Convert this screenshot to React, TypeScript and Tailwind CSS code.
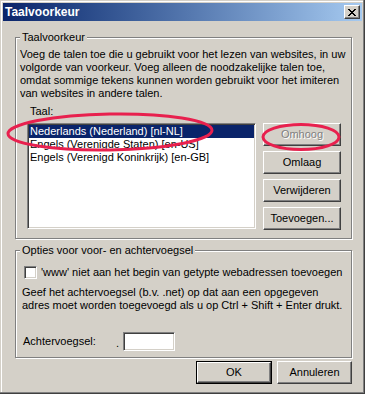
import React from "react";

const FONT = { fontFamily: '"Liberation Sans", Arial, sans-serif' };

const raised =
  "border border-t-white border-l-white border-b-[#404040] border-r-[#404040] shadow-[inset_-1px_-1px_0_#808080]";
const sunken =
  "border border-t-[#808080] border-l-[#808080] border-b-white border-r-white shadow-[inset_1px_1px_0_#404040,inset_-1px_-1px_0_#d4d0c8]";
const etched =
  "border border-[#808080] shadow-[inset_1px_1px_0_#ffffff,1px_1px_0_#ffffff]";

function Button({
  children,
  disabled,
  className = "",
}: {
  children: React.ReactNode;
  disabled?: boolean;
  className?: string;
}) {
  return (
    <div
      className={`flex items-center justify-center bg-[#d4d0c8] text-[11px] leading-[13px] ${raised} ${className} ${
        disabled
          ? "text-[#808080] [text-shadow:1px_1px_0_#ffffff]"
          : "text-black"
      }`}
    >
      {children}
    </div>
  );
}

const languages = [
  "Nederlands (Nederland) [nl-NL]",
  "Engels (Verenigde Staten) [en-US]",
  "Engels (Verenigd Koninkrijk) [en-GB]",
];

export default function App() {
  return (
    <div
      style={FONT}
      className="relative flex h-[394px] w-[365px] flex-col bg-[#d4d0c8] p-[3px] text-[11px] leading-[13px] text-black shadow-[inset_-1px_-1px_0_#404040,inset_-2px_-2px_0_#808080,inset_1px_1px_0_#d4d0c8,inset_2px_2px_0_#ffffff]"
    >
      {/* title bar */}
      <div className="flex h-[18px] items-center justify-between bg-linear-to-r from-[#0a246a] to-[#a6caf0] px-[2px]">
        <span className="text-[12px] font-bold leading-[14px] text-white">
          Taalvoorkeur
        </span>
        <div
          className={`flex h-[14px] w-[16px] items-center justify-center bg-[#d4d0c8] ${raised}`}
        >
          <svg width="8" height="7" viewBox="0 0 8 7" shapeRendering="crispEdges">
            <path d="M0 0h2v1h-2zM6 0h2v1h-2zM1 1h2v1h-2zM5 1h2v1h-2zM2 2h4v1h-4zM3 3h2v1h-2zM2 4h4v1h-4zM1 5h2v1h-2zM5 5h2v1h-2zM0 6h2v1h-2zM6 6h2v1h-2z" fill="#000" />
          </svg>
        </div>
      </div>

      {/* group 1 */}
      <fieldset className={`ml-[12px] mr-[10px] mt-[10px] px-[4px] pb-[8px] ${etched}`}>
        <legend className="bg-[#d4d0c8] px-[2px] leading-[13px]">Taalvoorkeur</legend>
        <p className="pt-[4px] whitespace-nowrap">
          Voeg de talen toe die u gebruikt voor het lezen van websites, in uw
          <br />
          volgorde van voorkeur. Voeg alleen de noodzakelijke talen toe,
          <br />
          omdat sommige tekens kunnen worden gebruikt voor het imiteren
          <br />
          van websites in andere talen.
        </p>
        <div className="mt-[5px] pl-[10px]">Taal:</div>
        <div className="mt-[5px] flex gap-[7px] pl-[7px]">
          <div className={`h-[106px] w-[229px] bg-white ${sunken} p-[1px]`}>
            {languages.map((l, i) => (
              <div
                key={l}
                className={`h-[13px] whitespace-nowrap pl-[1px] ${
                  i === 0 ? "bg-[#0a246a] text-white" : "text-black"
                }`}
              >
                {l}
              </div>
            ))}
          </div>
          <div className="flex flex-col gap-[5px]">
            <Button disabled className="h-[23px] w-[78px]">
              Omhoog
            </Button>
            <Button className="h-[23px] w-[78px]">Omlaag</Button>
            <Button className="h-[23px] w-[78px]">Verwijderen</Button>
            <Button className="h-[23px] w-[78px]">Toevoegen...</Button>
          </div>
        </div>
      </fieldset>

      {/* group 2 */}
      <fieldset className={`ml-[12px] mr-[10px] mt-[5px] px-[4px] pb-[6px] ${etched}`}>
        <legend className="bg-[#d4d0c8] px-[2px] leading-[13px]">
          Opties voor voor- en achtervoegsel
        </legend>
        <div className="mt-[9px] flex items-center gap-[4px] pl-[4px] whitespace-nowrap">
          <div className={`h-[13px] w-[13px] bg-white ${sunken}`} />
          <span>'www' niet aan het begin van getypte webadressen toevoegen</span>
        </div>
        <p className="mt-[7px] pl-[2px] whitespace-nowrap">
          Geef het achtervoegsel (b.v. .net) op dat aan een opgegeven
          <br />
          adres moet worden toegevoegd als u op Ctrl + Shift + Enter drukt.
        </p>
        <div className="mt-[20px] flex items-center pl-[3px]">
          <span className="w-[93px]">Achtervoegsel:</span>
          <span className="w-[7px] self-end pb-[3px] leading-[10px]">.</span>
          <div className={`h-[19px] w-[52px] bg-white ${sunken}`} />
        </div>
      </fieldset>

      {/* dialog buttons */}
      <div className="mt-[3px] flex justify-end gap-[5px] pr-[10px]">
        <div className="h-[23px] w-[76px] border border-black">
          <Button className="h-full w-full">OK</Button>
        </div>
        <Button className="h-[23px] w-[75px]">Annuleren</Button>
      </div>

      {/* red annotations */}
      <svg
        className="pointer-events-none absolute left-0 top-0"
        width="365"
        height="394"
      >
        <ellipse
          cx="110"
          cy="132"
          rx="102"
          ry="18"
          transform="rotate(-1 110 132)"
          fill="none"
          stroke="#e8204e"
          strokeWidth="3"
        />
        <ellipse
          cx="301"
          cy="137"
          rx="38"
          ry="12.5"
          fill="none"
          stroke="#e8204e"
          strokeWidth="3"
        />
      </svg>
    </div>
  );
}
